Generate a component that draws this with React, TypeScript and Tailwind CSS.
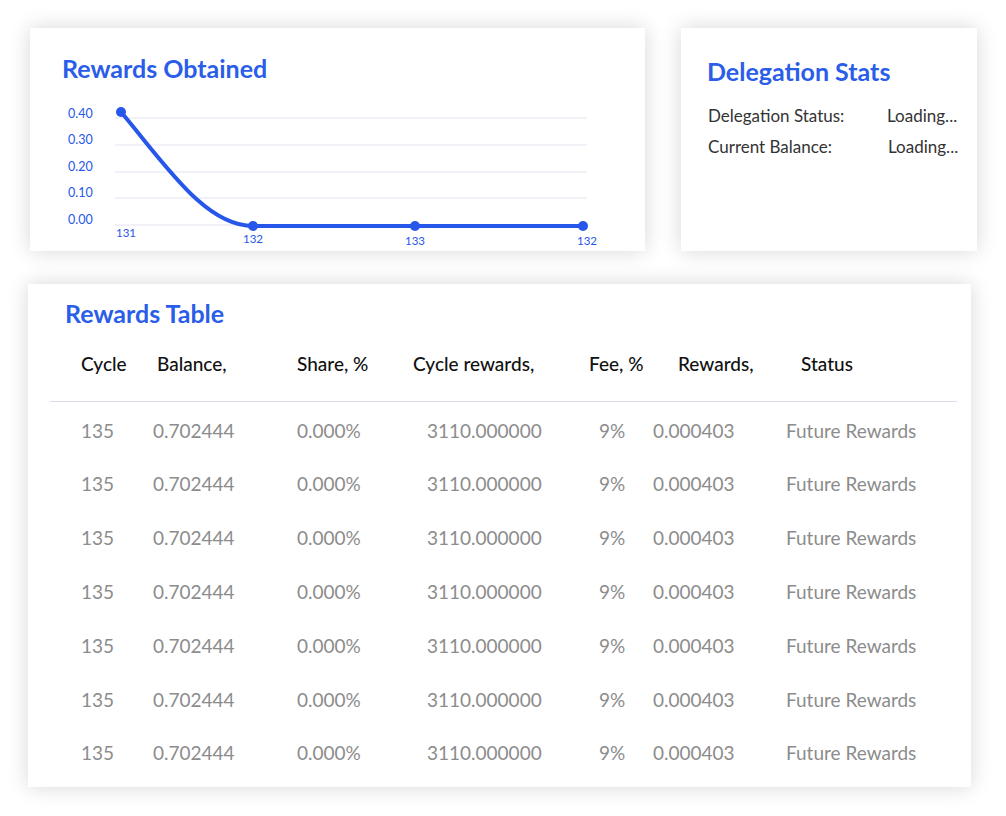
import React from "react";

const headers = [
  { label: "Cycle", w: "w-[76px]" },
  { label: "Balance,", w: "w-[140px]" },
  { label: "Share, %", w: "w-[116px]" },
  { label: "Cycle rewards,", w: "w-[176px]" },
  { label: "Fee, %", w: "w-[89px]" },
  { label: "Rewards,", w: "w-[123px]" },
  { label: "Status", w: "flex-1" },
];

const rows = Array.from({ length: 7 }, () => ({
  cycle: "135",
  balance: "0.702444",
  share: "0.000%",
  cycleRewards: "3110.000000",
  fee: "9%",
  rewards: "0.000403",
  status: "Future Rewards",
}));

function RewardsChart() {
  const blue = "#2757ea";
  const grid = [36, 63, 90, 116, 143];
  const yLabels = [
    { t: "0.40", y: 33 },
    { t: "0.30", y: 59 },
    { t: "0.20", y: 86 },
    { t: "0.10", y: 112 },
    { t: "0.00", y: 139 },
  ];
  const xLabels = [
    { t: "131", x: 86, y: 152 },
    { t: "132", x: 213, y: 158 },
    { t: "133", x: 375, y: 160 },
    { t: "132", x: 547, y: 160 },
  ];
  return (
    <svg width="615" height="169" viewBox="0 0 615 169" className="block">
      {grid.map((y) => (
        <line key={y} x1="85" x2="557" y1={y} y2={y} stroke="#e3e3ef" strokeWidth="1" />
      ))}
      {yLabels.map((l) => (
        <text key={l.t} x="38" y={l.y} dominantBaseline="middle" fontSize="12.5" fill={blue} fontFamily="Lato, sans-serif">
          {l.t}
        </text>
      ))}
      {xLabels.map((l, i) => (
        <text key={i} x={l.x} y={l.y} dominantBaseline="middle" fontSize="11.5" fill={blue} fontFamily="Lato, sans-serif">
          {l.t}
        </text>
      ))}
      <path d="M91 30 C 135 82, 175 144, 223 144 L 553 144" fill="none" stroke={blue} strokeWidth="4" strokeLinecap="round" />
      {[
        [91, 30],
        [223, 144],
        [385, 144],
        [553, 144],
      ].map(([cx, cy], i) => (
        <circle key={i} cx={cx} cy={cy} r="5" fill={blue} />
      ))}
    </svg>
  );
}

export default function App() {
  return (
    <div className="min-h-[816px] w-[1006px] bg-white pt-[28px] font-['Lato',sans-serif]">
      <div className="flex gap-[36px] pl-[30px]">
        {/* Rewards obtained */}
        <div className="h-[223px] w-[615px] bg-white shadow-[0_0_20px_rgba(0,0,0,0.16)]">
          <div className="px-[32px] pt-[26px] text-[25px] font-bold leading-[28px] text-[#2a5de8]">
            Rewards Obtained
          </div>
          <RewardsChart />
        </div>

        {/* Delegation stats */}
        <div className="h-[223px] w-[296px] bg-white pl-[26px] pr-[4px] pt-[29px] shadow-[0_0_20px_rgba(0,0,0,0.16)]">
          <div className="text-[25px] font-bold leading-[28px] text-[#2a5de8]">Delegation Stats</div>
          <div className="mt-[15px] flex flex-col text-[17px] leading-[31px] text-[#333]">
            <div className="flex">
              <span className="w-[180px] shrink-0 pl-[1px]">Delegation Status:</span>
              <span>Loading...</span>
            </div>
            <div className="flex">
              <span className="w-[181px] shrink-0 pl-[1px]">Current Balance:</span>
              <span>Loading...</span>
            </div>
          </div>
        </div>
      </div>

      {/* Rewards table */}
      <div className="ml-[28px] mt-[33px] h-[503px] w-[943px] bg-white pt-[15px] shadow-[0_0_20px_rgba(0,0,0,0.16)]">
        <div className="pl-[37px] text-[25px] font-bold leading-[28px] text-[#2a5de8]">Rewards Table</div>
        <div className="ml-[22px] mr-[14px] flex h-[75px] items-start border-b border-[#dcdce8] pl-[31px] pt-[25px] text-[19px] font-medium leading-[24px] text-[#111]">
          {headers.map((h) => (
            <div key={h.label} className={h.w}>
              {h.label}
            </div>
          ))}
        </div>
        <div className="flex flex-col pl-[53px] pt-[2px] text-[19px] text-[#8c8c8c]">
          {rows.map((r, i) => (
            <div key={i} className="flex h-[53.8px] items-center">
              <div className="w-[72px]">{r.cycle}</div>
              <div className="w-[144px]">{r.balance}</div>
              <div className="w-[130px]">{r.share}</div>
              <div className="w-[172px]">{r.cycleRewards}</div>
              <div className="w-[54px]">{r.fee}</div>
              <div className="w-[133px]">{r.rewards}</div>
              <div className="flex-1">{r.status}</div>
            </div>
          ))}
        </div>
      </div>
    </div>
  );
}
